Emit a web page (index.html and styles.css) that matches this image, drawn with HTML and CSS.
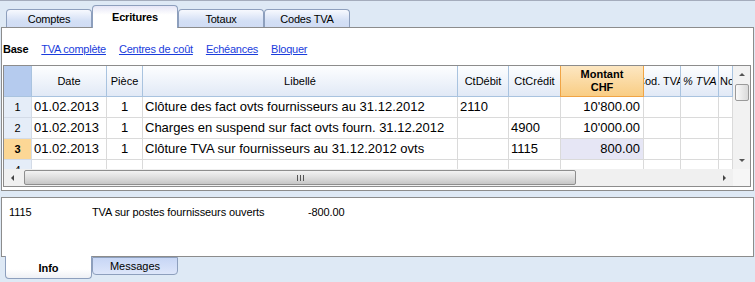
FILE: index.html
```html
<!DOCTYPE html>
<html lang="fr">
<head>
<meta charset="utf-8">
<title>Ecritures</title>
<link rel="stylesheet" href="styles.css">
</head>
<body>
<div class="app">
  <div class="tabs">
    <div class="tab">Comptes</div>
    <div class="tab active">Ecritures</div>
    <div class="tab">Totaux</div>
    <div class="tab">Codes TVA</div>
  </div>
  <div class="panel">
    <div class="links">
      <span class="base">Base</span>
      <a href="#">TVA complète</a>
      <a href="#">Centres de coût</a>
      <a href="#">Echéances</a>
      <a href="#">Bloquer</a>
    </div>
    <div class="grid">
      <div class="grid-main">
        <div class="viewport">
          <div class="row head">
            <div class="cell corner"></div>
            <div class="cell">Date</div>
            <div class="cell">Pièce</div>
            <div class="cell">Libellé</div>
            <div class="cell">CtDébit</div>
            <div class="cell">CtCrédit</div>
            <div class="cell sel"><span class="two">Montant<br>CHF</span></div>
            <div class="cell shift"><span>Cod. TVA</span></div>
            <div class="cell ital">% TVA</div>
            <div class="cell left">Notes</div>
          </div>
          <div class="row">
            <div class="cell rh">1</div>
            <div class="cell">01.02.2013</div>
            <div class="cell c">1</div>
            <div class="cell">Clôture des fact ovts fournisseurs au 31.12.2012</div>
            <div class="cell">2110</div>
            <div class="cell"></div>
            <div class="cell r">10'800.00</div>
            <div class="cell"></div>
            <div class="cell"></div>
            <div class="cell"></div>
          </div>
          <div class="row">
            <div class="cell rh">2</div>
            <div class="cell">01.02.2013</div>
            <div class="cell c">1</div>
            <div class="cell">Charges en suspend sur fact ovts fourn. 31.12.2012</div>
            <div class="cell"></div>
            <div class="cell">4900</div>
            <div class="cell r">10'000.00</div>
            <div class="cell"></div>
            <div class="cell"></div>
            <div class="cell"></div>
          </div>
          <div class="row">
            <div class="cell rh cur">3</div>
            <div class="cell">01.02.2013</div>
            <div class="cell c">1</div>
            <div class="cell">Clôture TVA sur fournisseurs au 31.12.2012 ovts</div>
            <div class="cell"></div>
            <div class="cell">1115</div>
            <div class="cell r focus">800.00</div>
            <div class="cell"></div>
            <div class="cell"></div>
            <div class="cell"></div>
          </div>
          <div class="row">
            <div class="cell rh">4</div>
            <div class="cell"></div>
            <div class="cell"></div>
            <div class="cell"></div>
            <div class="cell"></div>
            <div class="cell"></div>
            <div class="cell"></div>
            <div class="cell"></div>
            <div class="cell"></div>
            <div class="cell"></div>
          </div>
        </div>
        <div class="vscroll">
          <div class="sbtn"><span class="tri up"></span></div>
          <div class="vthumb"></div>
          <div class="vspace"></div>
          <div class="sbtn"><span class="tri down"></span></div>
        </div>
      </div>
      <div class="hscroll">
        <div class="hbtn"><span class="tri lft"></span></div>
        <div class="hthumb"><span class="grip"></span><span class="grip"></span><span class="grip"></span></div>
        <div class="hspace"></div>
        <div class="hbtn"><span class="tri rgt"></span></div>
        <div class="sq"></div>
      </div>
    </div>
  </div>
  <div class="info">
    <span>1115</span>
    <span>TVA sur postes fournisseurs ouverts</span>
    <span>-800.00</span>
  </div>
  <div class="btabs">
    <div class="btab active">Info</div>
    <div class="btab">Messages</div>
  </div>
</div>
</body>
</html>
```
FILE: styles.css
```css
html, body {
  margin: 0;
  padding: 0;
}
body {
  width: 755px;
  height: 282px;
  overflow: hidden;
  background: #dee9f5;
  font-family: "Liberation Sans", Arial, sans-serif;
  font-size: 11px;
  color: #000;
}
.app {
  border-top: 1px solid #a4acbc;
}

/* top tabs */
.tabs {
  display: flex;
  align-items: flex-end;
  height: 26px;
  padding-left: 6px;
}
.tab {
  box-sizing: border-box;
  width: 86px;
  height: 18px;
  padding-top: 1px;
  border: 1px solid #8d9fbd;
  border-bottom: none;
  border-radius: 4px 4px 0 0;
  background: linear-gradient(#f7f9fe, #d3dff5 65%, #d0dcf4);
  text-align: center;
  line-height: 16px;
  letter-spacing: -0.2px;
}
.tab.active {
  height: 23px;
  margin-bottom: -1px;
  padding-top: 3px;
  background: linear-gradient(#e6e6f6, #ffffff 40%);
  font-weight: bold;
  position: relative;
  z-index: 1;
}

/* main panel */
.panel {
  box-sizing: border-box;
  width: 753px;
  height: 164px;
  margin-left: 1px;
  border: 1px solid #8c8c8c;
  background: #fff;
}
.links {
  box-sizing: border-box;
  height: 37px;
  padding: 13px 0 0 1px;
  display: flex;
  gap: 13px;
  line-height: 16px;
  letter-spacing: -0.25px;
}
.base {
  font-weight: bold;
}
.links a {
  color: #1a3ddc;
  text-decoration: underline;
}

/* grid */
.grid {
  box-sizing: border-box;
  width: 748px;
  height: 122px;
  margin-left: 1px;
  border: 1px solid #8c8c8c;
  display: flex;
  flex-direction: column;
}
.grid-main {
  display: flex;
  height: 103px;
}
.viewport {
  width: 729px;
  height: 103px;
  overflow: hidden;
}
.row {
  display: grid;
  grid-template-columns: 28px 75px 36px 315px 51px 52px 83px 37px 38px 14px;
  height: 21px;
}
.cell {
  box-sizing: border-box;
  border-right: 1px solid #dadada;
  border-bottom: 1px solid #dadada;
  padding: 0 2px;
  font-size: 13px;
  line-height: 20px;
  white-space: nowrap;
  overflow: hidden;
}
.cell.c { text-align: center; }
.cell.r { text-align: right; padding-right: 3px; }
.cell.rh {
  background: #e5edf8;
  border-color: #d3dbe7;
  font-size: 11px;
  text-align: center;
  padding: 0;
}
.cell.rh.cur {
  background: #fcd795;
  font-weight: bold;
}
.cell.focus {
  background: #e6e6f5;
}

.row.head {
  height: 31px;
}
.head .cell {
  display: flex;
  align-items: center;
  justify-content: center;
  padding: 0;
  border-color: #a9c3df;
  background: linear-gradient(#fdfeff, #e1e9f6);
  font-size: 11px;
  line-height: 14px;
}
.head .cell.corner {
  background: #b5cbee;
}
.head .cell.sel {
  background: linear-gradient(#fde7c2, #f9cd84);
  border-color: #f0a445;
  box-shadow: -1px 0 0 #f0a445;
  font-weight: bold;
  position: relative;
}
.head .cell .two {
  text-align: center;
  line-height: 13px;
}
.head .cell.shift {
  justify-content: flex-start;
}
.head .cell.shift span {
  margin-left: -7px;
}
.head .cell.ital {
  font-style: italic;
  justify-content: flex-start;
  padding-left: 2px;
}
.head .cell.left {
  justify-content: flex-start;
  padding-left: 1px;
}

/* scrollbars */
.vscroll {
  width: 17px;
  display: flex;
  flex-direction: column;
  background: #f2f2f2;
}
.sbtn {
  height: 17px;
  display: flex;
  align-items: center;
  justify-content: center;
}
.vthumb {
  box-sizing: border-box;
  height: 17px;
  margin: 1px 1px 0 2px;
  border: 1px solid #9a9a9a;
  border-radius: 2px;
  background: linear-gradient(90deg, #fafafa, #dadada);
}
.vspace {
  flex: 1;
}
.tri {
  width: 0;
  height: 0;
  display: block;
}
.tri.up {
  border-left: 3px solid transparent;
  border-right: 3px solid transparent;
  border-bottom: 3px solid #555;
}
.tri.down {
  border-left: 3px solid transparent;
  border-right: 3px solid transparent;
  border-top: 3px solid #555;
}
.tri.lft {
  border-top: 3px solid transparent;
  border-bottom: 3px solid transparent;
  border-right: 3px solid #444;
}
.tri.rgt {
  border-top: 3px solid transparent;
  border-bottom: 3px solid transparent;
  border-left: 3px solid #444;
}
.hscroll {
  height: 17px;
  display: flex;
  background: #f0f0f0;
}
.hbtn {
  width: 17px;
  display: flex;
  align-items: center;
  justify-content: center;
}
.hthumb {
  box-sizing: border-box;
  width: 552px;
  height: 15px;
  margin: 1px 0 0 3px;
  border: 1px solid #8e8e8e;
  border-radius: 2px;
  background: linear-gradient(#f3f3f3, #dcdcdc 55%, #c6c6c6);
  display: flex;
  align-items: center;
  justify-content: center;
  gap: 2px;
}
.grip {
  width: 1px;
  height: 6px;
  background: #555;
}
.hspace {
  flex: 1;
}
.sq {
  width: 17px;
  background: #f6f6f6;
}

/* info panel */
.info {
  box-sizing: border-box;
  width: 753px;
  height: 60px;
  margin: 6px 0 0 1px;
  padding: 7px 0 0 7px;
  border: 1px solid #8c8c8c;
  background: #fff;
  display: grid;
  grid-template-columns: 83px 216px auto;
  align-content: start;
  line-height: 14px;
  letter-spacing: -0.1px;
}

/* bottom tabs */
.btabs {
  display: flex;
  align-items: flex-start;
  padding-left: 5px;
  margin-top: -1px;
}
.btab {
  box-sizing: border-box;
  width: 86px;
  height: 18px;
  margin-top: 1px;
  border: 1px solid #8d9fbd;
  border-radius: 0 0 4px 4px;
  background: linear-gradient(#c7d6f5, #dde6fa);
  text-align: center;
  line-height: 16px;
}
.btab.active {
  width: 87px;
  height: 23px;
  margin-top: 0;
  padding-top: 4px;
  border-top: none;
  background: linear-gradient(#ffffff 60%, #eef0f5);
  font-weight: bold;
  position: relative;
  z-index: 1;
}
```
